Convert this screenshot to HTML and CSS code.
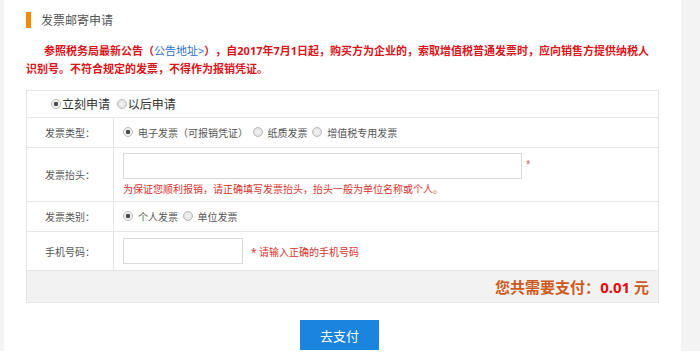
FILE: index.html
```html
<!DOCTYPE html>
<html lang="zh-CN">
<head>
    <meta charset="UTF-8">
    <title>发票邮寄申请</title>
    <link rel="stylesheet" href="styles.css">
</head>
<body>
    <div class="page">
        <div class="side-left"></div>
        <div class="main">
            <div class="head">
                <span class="head-bar"></span>
                <span class="head-title">发票邮寄申请</span>
            </div>
            <p class="notice">参照税务局最新公告（<a class="notice-link" href="#">公告地址&gt;</a>），自2017年7月1日起，购买方为企业的，索取增值税普通发票时，应向销售方提供纳税人识别号。不符合规定的发票，不得作为报销凭证。</p>

            <table class="form">
                <tr class="row-apply">
                    <td colspan="2">
                        <label class="opt opt-big"><span class="radio checked"></span>立刻申请</label>
                        <label class="opt opt-big"><span class="radio"></span>以后申请</label>
                    </td>
                </tr>
                <tr class="row-type">
                    <td class="label">发票类型：</td>
                    <td class="field">
                        <label class="opt"><span class="radio checked"></span>电子发票（可报销凭证）</label>
                        <label class="opt"><span class="radio"></span>纸质发票</label>
                        <label class="opt"><span class="radio"></span>增值税专用发票</label>
                    </td>
                </tr>
                <tr class="row-title">
                    <td class="label">发票抬头：</td>
                    <td class="field">
                        <div class="line">
                            <input class="input input-long" type="text">
                            <span class="star">*</span>
                        </div>
                        <div class="hint">为保证您顺利报销，请正确填写发票抬头，抬头一般为单位名称或个人。</div>
                    </td>
                </tr>
                <tr class="row-kind">
                    <td class="label">发票类别：</td>
                    <td class="field">
                        <label class="opt"><span class="radio checked"></span>个人发票</label>
                        <label class="opt"><span class="radio"></span>单位发票</label>
                    </td>
                </tr>
                <tr class="row-phone">
                    <td class="label">手机号码：</td>
                    <td class="field">
                        <div class="line">
                            <input class="input input-short" type="text">
                            <span class="hint hint-inline">* 请输入正确的手机号码</span>
                        </div>
                    </td>
                </tr>
                <tr class="row-total">
                    <td colspan="2">您共需要支付：<span class="price">0.01</span> 元</td>
                </tr>
            </table>

            <div class="actions">
                <button class="pay-btn">去支付</button>
            </div>
        </div>
        <div class="side-right"></div>
    </div>
</body>
</html>
```

FILE: styles.css
```css
body {
    margin: 0;
    background-color: #fff;
    font-family: "Noto Sans", "Noto Sans CJK SC", sans-serif;
    color: #333;
    text-spacing-trim: space-all;
}
.page {
    display: flex;
    height: 351px;
}
.side-left {
    width: 4px;
    background-color: #f3f3f3;
}
.side-right {
    flex: 1;
    background-color: #f3f3f3;
}
.main {
    width: 633px;
    padding: 12px 22px 0 22px;
    background-color: #fff;
}
.head {
    display: flex;
    align-items: center;
    height: 16px;
}
.head-bar {
    width: 5px;
    height: 16px;
    background-color: #f58a07;
}
.head-title {
    margin-left: 10px;
    font-size: 12px;
    color: #555;
}
.notice {
    margin: 14px 0 0 0;
    text-indent: 18px;
    font-size: 11px;
    line-height: 18px;
    font-weight: bold;
    color: #d9141a;
}
.notice-link {
    color: #2d6fc7;
    font-weight: normal;
    text-decoration: none;
}
.form {
    width: 100%;
    margin-top: 12px;
    border-collapse: collapse;
    font-size: 10px;
    color: #555;
}
.form td {
    border: 1px solid #e6e6e6;
    padding: 0;
}
.form .label {
    width: 86px;
    text-align: center;
    font-size: 10px;
}
.form .field {
    padding-left: 9px;
}
.row-apply td {
    height: 26px;
    padding-left: 24px;
}
.row-type td {
    height: 29px;
}
.row-title td {
    height: 53px;
}
.row-kind td {
    height: 29px;
}
.row-phone td {
    height: 38px;
}
.row-total td {
    height: 31px;
    background-color: #f2f2f2;
    text-align: right;
    padding-right: 9px;
    font-size: 15px;
    font-weight: bold;
    color: #cd5a1e;
}
.price {
    color: #e00d0d;
}
.opt {
    display: inline-flex;
    align-items: center;
    margin-right: 2px;
}
.opt .radio {
    margin-right: 5px;
}
.opt-big {
    font-size: 12px;
    color: #333;
    margin-right: 4px;
}
.opt-big .radio {
    margin-right: 1px;
}
.radio {
    display: inline-block;
    box-sizing: border-box;
    width: 10px;
    height: 10px;
    border: 1px solid #b9b9b9;
    border-radius: 50%;
    background: radial-gradient(circle, #f4f4f4 0, #dcdcdc 100%);
}
.radio.checked {
    background: radial-gradient(circle, #4a4a4a 0, #4a4a4a 2px, #f4f4f4 2.5px, #e4e4e4 100%);
}
.line {
    display: flex;
    align-items: center;
}
.input {
    box-sizing: border-box;
    border: 1px solid #d8d8d8;
    background-color: #fff;
    margin: 0;
    padding: 0 6px;
}
.input-long {
    width: 399px;
    height: 26px;
}
.input-short {
    width: 120px;
    height: 26px;
}
.star {
    margin-left: 4px;
    color: #c9504c;
    font-size: 8px;
    align-self: flex-start;
    margin-top: 5px;
}
.hint {
    margin-top: 2px;
    font-size: 10px;
    color: #d8322e;
}
.hint-inline {
    margin: 0 0 0 8px;
}
.actions {
    display: flex;
    justify-content: center;
    margin-top: 17px;
    padding-right: 6px;
}
.pay-btn {
    width: 79px;
    height: 30px;
    border: none;
    background-color: #1b84dc;
    color: #fff;
    font-family: "Noto Sans CJK SC", sans-serif;
    font-size: 13px;
    cursor: pointer;
}
```
